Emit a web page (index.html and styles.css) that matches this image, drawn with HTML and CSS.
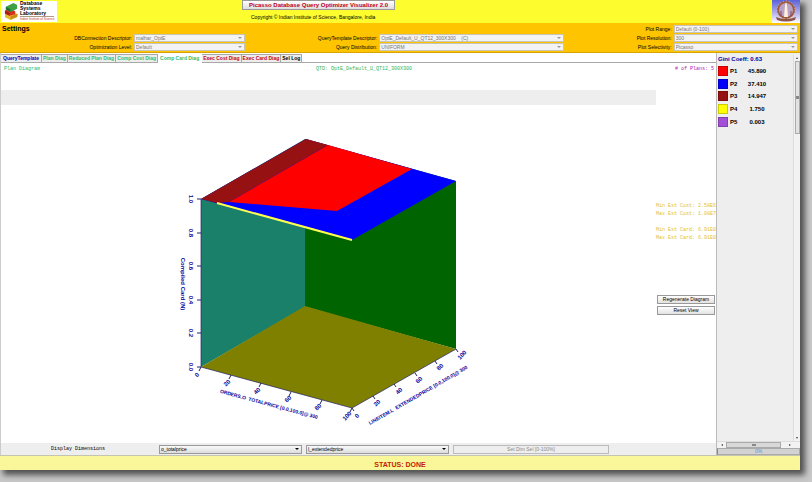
FILE: index.html
```
<!DOCTYPE html>
<html lang="en">
<head>
  <meta charset="UTF-8" />
  <meta name="viewport" content="width=device-width, initial-scale=1.0"/>
  <title>Picasso Database Query Optimizer Visualizer</title>
  <link rel="stylesheet" href="styles.css">
</head>
<body>
  <div class="window">
    <header class="banner">
      <div class="lab-logo">
        <svg class="lab-mark" viewBox="0 0 16 19" aria-hidden="true">
          <path d="M1 12 L8 9 L15 12 L14 15 L7 18 L1 15 Z" fill="#e8b92c"/>
          <path d="M7 14 L14 11.500 V14.500 L7 17.500 Z" fill="#c98a18"/>
          <path d="M1 8 L8 6 L12 9 V12 L6 13.500 L1 11 Z" fill="#d8301f"/>
          <path d="M1 8 L6 10.500 V13.500 L1 11 Z" fill="#a81c14"/>
          <path d="M2 4 L10 0 L14 2 V6 L7 9.500 L2 7 Z" fill="#3fa047"/>
          <path d="M2 4 L7 6.500 V9.500 L2 7 Z" fill="#247030"/>
        </svg>
        <div class="lab-name">
          <strong>Database<br>Systems<br>Laboratory</strong>
          <small>Indian Institute of Science</small>
        </div>
      </div>
      <div class="banner-title">
        <button type="button" class="title-btn">Picasso Database Query Optimizer Visualizer 2.0</button>
        <p>Copyright © Indian Institute of Science, Bangalore, India</p>
      </div>
      <svg class="iisc-logo" viewBox="0 0 28 23" role="img" aria-label="Indian Institute of Science">
        <defs>
          <linearGradient id="sky" x1="0" y1="0" x2="0" y2="1">
            <stop offset="0" stop-color="#5a62d8"/>
            <stop offset="0.600" stop-color="#b9b6ee"/>
            <stop offset="1" stop-color="#fff"/>
          </linearGradient>
        </defs>
        <rect width="28" height="23" fill="url(#sky)"/>
        <circle cx="14" cy="10" r="8" fill="#b9a3c4" stroke="#a0573a" stroke-width="2"/>
        <circle cx="14" cy="10" r="9" fill="none" stroke="#e3b58c" stroke-width="1" stroke-dasharray="1 2"/>
        <path d="M12 17 L13 5 L14 2 L15 5 L16 17 Z" fill="#fff0dc"/>
        <path d="M9 16 V11 M19 16 V11" stroke="#7c4a66" stroke-width="1"/>
        <path d="M4 17 Q14 21 24 17 L23 20 Q14 23 5 20 Z" fill="#8c5648"/>
      </svg>
    </header>

    <section class="settings">
      <h2>Settings</h2>
      <div class="fields">
        <label for="dbconn">DBConnection Descriptor:</label>
        <span class="drop"><select id="dbconn" disabled><option>malhar_OptE</option></select></span>
        <label for="optlevel">Optimization Level:</label>
        <span class="drop"><select id="optlevel" disabled><option>Default</option></select></span>
      </div>
      <div class="fields">
        <label for="qtd">QueryTemplate Descriptor:</label>
        <span class="drop"><select id="qtd" disabled><option>OptE_Default_U_QT12_300X300 &nbsp;&nbsp; (C)</option></select></span>
        <label for="dist">Query Distribution:</label>
        <span class="drop"><select id="dist" disabled><option>UNIFORM</option></select></span>
      </div>
      <div class="fields fields-plot">
        <label for="range">Plot Range:</label>
        <span class="drop"><select id="range" disabled><option>Default (0-100)</option></select></span>
        <label for="res">Plot Resolution:</label>
        <span class="drop"><select id="res" disabled><option>300</option></select></span>
        <label for="sel">Plot Selectivity:</label>
        <span class="drop"><select id="sel" disabled><option>Picasso</option></select></span>
      </div>
    </section>

    <div class="main">
      <main class="work">
        <nav class="tabs">
          <button type="button" class="blue">QueryTemplate</button>
          <button type="button" class="green">Plan Diag</button>
          <button type="button" class="green">Reduced Plan Diag</button>
          <button type="button" class="green">Comp Cost Diag</button>
          <button type="button" class="green active">Comp Card Diag</button>
          <button type="button" class="red">Exec Cost Diag</button>
          <button type="button" class="red">Exec Card Diag</button>
          <button type="button">Sel Log</button>
        </nav>
        <div class="info">
          <span>Plan Diagram</span>
          <span>QTD: OptE_Default_U_QT12_300X300</span>
          <span class="plans"># of Plans: 5</span>
        </div>
        <div class="canvas">
          <div class="plot">
            <div class="strip"></div>
            <svg class="cube" viewBox="0 0 655 338" role="img" aria-label="Compiled cardinality diagram">
              <!-- walls and floor -->
              <path d="M200 94 L304 34 V202 L200 262 Z" fill="#1b8069"/>
              <path d="M304 34 L455 76 V244 L304 202 Z" fill="#006400"/>
              <path d="M200 262 L304 201 L455 244 L351 303 Z" fill="#808000"/>
              <!-- plan surface -->
              <path d="M200 94 L305 34 L455 76 L351 135 Z" fill="#00f"/>
              <path d="M228 97 L327 40 L411 64 L336 106 Z" fill="#f00"/>
              <path d="M200 94 L305 34 L327 40 L228 97 L216 98 Z" fill="#961212"/>
              <path d="M216 98 L351 135" fill="none" stroke="#ffff50" stroke-width="2"/>
              <g stroke="#22226a" fill="none">
                <path d="M200 94 V262 L351 303 L455 244" stroke-opacity="0.700"/>
                <path d="M196 94 h4 M196 128 h4 M196 161 h4 M196 195 h4 M196 228 h4 M196 262 h4"/>
                <path d="M200 262 l-2 4 M230 270 l-2 4 M260 278 l-2 4 M290 287 l-2 4 M321 295 l-2 4 M351 303 l-2 4"/>
                <path d="M351 303 l2 3 M372 291 l2 3 M393 279 l2 3 M414 268 l2 3 M434 256 l2 3 M455 244 l2 3"/>
              </g>
              <g class="axis">
                <text transform="translate(190 94) rotate(90)">1.0</text>
                <text transform="translate(190 128) rotate(90)">0.8</text>
                <text transform="translate(190 161) rotate(90)">0.6</text>
                <text transform="translate(190 195) rotate(90)">0.4</text>
                <text transform="translate(190 228) rotate(90)">0.2</text>
                <text transform="translate(190 262) rotate(90)">0.0</text>
                <text transform="translate(182 179) rotate(90)">Compiled Card (N)</text>
                <text transform="translate(196 270) rotate(-45)">0</text>
                <text transform="translate(226 278) rotate(-45)">20</text>
                <text transform="translate(256 286) rotate(-45)">40</text>
                <text transform="translate(287 294) rotate(-45)">60</text>
                <text transform="translate(317 302) rotate(-45)">80</text>
                <text transform="translate(346 311) rotate(-45)">100</text>
                <text class="axis-name" transform="translate(268 299) rotate(15)">ORDERS.O_TOTALPRICE [0.0,100.0]@ 300</text>
                <text transform="translate(356 311) rotate(-45)">0</text>
                <text transform="translate(376 298) rotate(-45)">20</text>
                <text transform="translate(398 286) rotate(-45)">40</text>
                <text transform="translate(418 275) rotate(-45)">60</text>
                <text transform="translate(439 262) rotate(-45)">80</text>
                <text transform="translate(461 250) rotate(-45)">100</text>
                <text class="axis-name" transform="translate(417 290) rotate(-30)">LINEITEM.L_EXTENDEDPRICE [0.0,100.0]@ 300</text>
              </g>
            </svg>
          </div>
          <aside class="side">
            <p>Min Est Cost: 2.58E6<br>Max Est Cost: 1.08E7</p>
            <p>Min Est Card: 6.91E0<br>Max Est Card: 6.91E0</p>
            <div class="side-btns">
              <button type="button">Regenerate Diagram</button>
              <button type="button">Reset View</button>
            </div>
          </aside>
        </div>
        <div class="dims">
          <span class="dims-label">Display Dimensions</span>
          <span class="drop"><select aria-label="First dimension"><option>o_totalprice</option></select></span>
          <span class="drop"><select aria-label="Second dimension"><option>l_extendedprice</option></select></span>
          <button type="button" disabled>Set Dim Sel [0-100%]</button>
        </div>
      </main>

      <aside class="legend">
        <div class="legend-body">
          <div class="legend-list">
            <h3>Gini Coeff: 0.63</h3>
            <table>
              <tr><td><i class="swatch p1"></i></td><td>P1</td><td>45.890</td></tr>
              <tr><td><i class="swatch p2"></i></td><td>P2</td><td>37.410</td></tr>
              <tr><td><i class="swatch p3"></i></td><td>P3</td><td>14.947</td></tr>
              <tr><td><i class="swatch p4"></i></td><td>P4</td><td>1.750</td></tr>
              <tr><td><i class="swatch p5"></i></td><td>P5</td><td>0.003</td></tr>
            </table>
          </div>
          <div class="vscroll"><i class="arrow up"></i><i class="thumb"></i><i class="arrow down"></i></div>
        </div>
        <div class="hscroll"><i class="arrow left"></i><i class="thumb"></i><i class="arrow right"></i></div>
        <div class="progress">0%</div>
      </aside>
    </div>

    <footer class="status">STATUS: DONE</footer>
  </div>
</body>
</html>
```
FILE: styles.css
```
:root {
  --yellow: #fdfc2e;
  --orange: #ffc400;
  --panel: #eeeeee;
  --line: #a8a8a8;
  --navy: #00009c;
}
*{margin:0;padding:0;box-sizing:border-box;}
html, body {height:100%;}
body {
  background:#c9c9c9; padding:0 12px 12px 0; overflow:hidden;
  font-family:'Liberation Sans',sans-serif; font-size:5px; line-height:8px; color:#000;
}
button, select {font:inherit; color:inherit; border-radius:0; appearance:none;}

.window {
  min-height:100%; display:flex; flex-direction:column; background:#fff;
  box-shadow:4px 4px 6px 1px #505050;
}

/* top banner */
.banner {height:23px; display:flex; background:var(--yellow);}
.lab-logo {display:flex; gap:1px; width:56px; height:21px; margin:1px; padding-left:3px; background:#fff; overflow:hidden;}
.lab-mark {width:15px; height:18px; margin-top:2px; flex:none;}
.lab-name strong {display:block; line-height:5px;}
.lab-name small {
  display:block; border-top:1px solid #b09a80; font-size:3px; line-height:4px;
  color:#c0392b; white-space:nowrap;
}
.banner-title {margin-left:23%;}
.banner-title p {padding-left:9px;}
.title-btn {
  display:block; width:153px; height:10px; margin-bottom:3px; border:1px solid #999;
  background:linear-gradient(#fff,#ddd); color:#c00018;
  font-weight:bold; font-size:6px; line-height:8px; white-space:nowrap;
}
.iisc-logo {width:28px; height:23px; margin-left:auto;}

/* settings */
.settings {
  position:relative; display:grid; grid-template-columns:245fr 318fr 236fr; align-items:end;
  height:30px; padding-bottom:1px; background:var(--orange); border-bottom:1px solid #d8a400;
}
.settings h2 {position:absolute; left:2px; top:2px; font-size:7px;}
.fields {display:grid; grid-template-columns:132px 1fr; grid-auto-rows:8px; gap:1px 2px; text-align:right;}
.fields-plot {grid-template-columns:108px 1fr; padding-right:2px;}
.drop {position:relative; display:block; height:8px;}
.drop select {
  display:block; width:100%; height:100%; padding:0 8px 0 1px; border:1px solid #c8c4b8; background:#f3f3f3;
  color:#777; line-height:6px; opacity:1;
}
.drop::after {
  content:""; position:absolute; right:3px; top:3px; border:2px solid transparent;
  border-top-color:#999; border-bottom:0; pointer-events:none;
}

/* tabs */
.main {flex:1; display:flex;}
.work {flex:1; min-width:0; display:flex; flex-direction:column; border-left:1px solid #ccc;}
.tabs {display:flex; align-items:flex-end; height:10px; border-bottom:1px solid var(--line);}
.tabs button {
  height:8px; padding:0 1px; border:1px solid var(--line); border-width:1px 1px 0 0;
  background:#ededed; font-weight:bold; line-height:7px; white-space:nowrap;
}
.tabs .blue {color:#0000b4; padding:0 2px;}
.tabs .green {color:#2fc06c;}
.tabs .red {color:#c4001c;}
.tabs .active {height:10px; padding:0 2px; background:#fff; border-color:#fff; margin-bottom:-1px;}

/* diagram area */
.info {
  display:grid; grid-template-columns:313fr auto 303fr; padding:2px 2px 0 3px; height:27px;
  font-family:'Liberation Mono',monospace; color:#1fb860;
}
.plans {text-align:right; color:#b020b8;}
.canvas {flex:1; display:flex;}
.plot {flex:1; min-width:0;}
.strip {height:15px; background:var(--panel);}
.cube {display:block; width:100%;}
.axis {fill:var(--navy); text-anchor:middle; font-size:6px; font-weight:bold;}
.axis text {dominant-baseline:central;}
.axis .axis-name {font-size:5px;}
.side {
  width:60px; padding-top:112px; font-family:'Liberation Mono',monospace;
  color:#dfbe30; white-space:nowrap;
}
.side p {margin-bottom:8px;}
.side-btns {margin-top:53px; padding:0 1px; display:grid; gap:2px;}
.side-btns button {
  height:9px; border:1px solid #999; background:linear-gradient(#fff,#e2e2e2); color:#000;
  font-family:'Liberation Sans',sans-serif; line-height:7px;
}
.dims {
  display:grid; grid-template-columns:154fr 143fr 143fr 156fr 103fr; column-gap:4px; align-items:center;
  height:12px; background:var(--panel);
}
.dims-label {justify-self:center; font-family:'Liberation Mono',monospace;}
.dims .drop {height:9px;}
.dims select {border-color:#999; background:linear-gradient(#fafafa,#dcdcdc); color:#000;}
.dims .drop::after {border-top-color:#000;}
.dims button {height:9px; border:1px solid #bbb; background:var(--panel); color:#8a8a8a; line-height:7px;}

/* legend */
.legend {width:84px; display:flex; flex-direction:column; background:var(--panel); border-left:1px solid #bbb; padding-top:2px;}
.legend-body {flex:1; display:flex;}
.legend-list {flex:1; padding-left:1px; font-size:6px; font-weight:bold;}
.legend h3 {font-size:6px; margin-bottom:2px; color:var(--navy);}
.legend table {width:50px; height:63px; border-collapse:collapse; line-height:10px;}
.legend td:first-child {width:12px;}
.legend td:last-child {text-align:center; width:22px;}
.swatch {display:block; width:10px; height:10px; border:1px solid rgba(0,0,0,0.2);}
.p1 {background:#f00;}
.p2 {background:#00f;}
.p3 {background:#961212;}
.p4 {background:#ff0;}
.p5 {background:#a44fd8;}
.vscroll, .hscroll {display:flex; align-items:center; background:#f2f2f2;}
.vscroll {flex-direction:column; width:7px; border-left:1px solid #ddd;}
.hscroll {height:7px; padding-right:7px; border-top:1px solid #ddd;}
.arrow {border:1px solid transparent; margin:2px;}
.up {border-bottom:2px solid #444; border-top:0;}
.down {border-top:2px solid #444; border-bottom:0; margin-top:auto;}
.left {border-right:2px solid #444; border-left:0; margin-left:4px;}
.right {border-left:2px solid #444; border-right:0; margin-left:auto;}
.thumb {border:1px solid #aaa; background:#ddd;}
.vscroll .thumb {width:5px; height:73px; background:linear-gradient(#888,#888) center/3px 3px no-repeat, #e2e2e2;}
.hscroll .thumb {width:55px; height:6px; margin-left:1px; background:linear-gradient(#888,#888) center/4px 2px no-repeat, #d8d8d8;}
.progress {
  height:7px; border:1px solid #aaa; border-left:1px solid #3a98e8; background:#d2d2d2; color:#4a9ad8;
  line-height:5px; text-align:center;
}

.status {
  height:15px; padding-top:4px; border-top:1px solid #c4c4b0; background:#f9f79a; color:#c41c00;
  font-size:7px; line-height:10px; font-weight:bold; text-align:center;
}
```
